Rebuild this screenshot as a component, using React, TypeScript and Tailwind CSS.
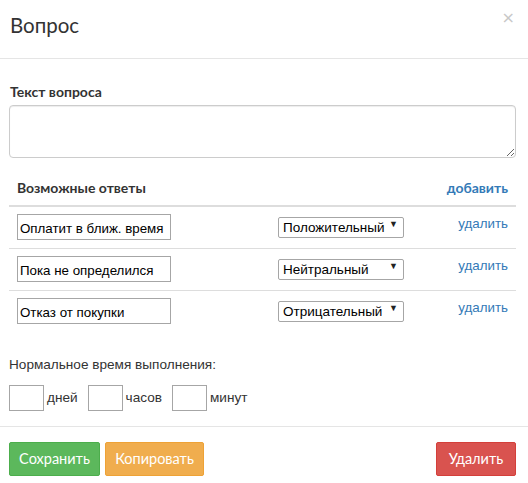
import React from "react";

const rows = [
  { text: "Оплатит в ближ. время", sel: "Положительный" },
  { text: "Пока не определился", sel: "Нейтральный" },
  { text: "Отказ от покупки", sel: "Отрицательный" },
];

export default function App() {
  return (
    <div className="w-[528px] h-[483px] bg-white text-[#333] overflow-hidden">
      {/* header */}
      <div className="h-[59px] border-b border-[#e5e5e5] flex justify-between items-start pl-[10px] pr-[13px]">
        <div className="pt-[11px] text-[20.5px] leading-[28px] font-['Lato',sans-serif] font-normal">Вопрос</div>
        <div className="mt-[10px] text-[16px] leading-[16px] font-normal text-[#c8c8c8] font-['DejaVu_Sans',sans-serif]">×</div>
      </div>

      {/* body */}
      <div className="pl-[9px] pr-[12px] pt-[24px]">
        <div className="pl-[1px] text-[14px] leading-[18px] font-bold font-['Lato',sans-serif]">Текст вопроса</div>
        <textarea className="mt-[4px] block w-full h-[53px] border border-[#ccc] rounded-[4px] shadow-[inset_0_1px_1px_rgba(0,0,0,0.075)] resize-y outline-none"></textarea>

        <div className="mt-[13px]">
          <div className="flex justify-between items-center px-[8px] py-[8px] border-b-2 border-[#ddd] text-[14px] leading-[18px] font-bold font-['Lato',sans-serif]">
            <span>Возможные ответы</span>
            <span className="text-[#337ab7]">добавить</span>
          </div>
          {rows.map((r, i) => (
            <div
              key={i}
              className={
                "flex items-start px-[8px] py-[8px] " +
                (i < rows.length - 1 ? "border-b border-[#ddd]" : "")
              }
            >
              <input
                defaultValue={r.text}
                className="mt-[-1px] w-[154px] h-[26px] border border-[#a6a6a6] px-[2px] pt-[2px] text-[13.33px] text-black font-['Liberation_Sans',sans-serif] outline-none"
              />
              <div className="relative ml-[107px] mt-[-1px] w-[126px] h-[21px]">
                <select
                  defaultValue={r.sel}
                  className="appearance-none w-full h-full border border-[#a6a6a6] rounded-[2px] bg-white pl-[4px] text-[13.5px] leading-[19px] text-black font-['Liberation_Sans',sans-serif] outline-none"
                >
                  <option>Положительный</option>
                  <option>Нейтральный</option>
                  <option>Отрицательный</option>
                </select>
                <span className="absolute right-[6px] top-[3px] text-[9px] leading-[14px] text-[#222] pointer-events-none">▼</span>
              </div>
              <span className="ml-auto text-[13.33px] leading-[18px] text-[#337ab7] font-['Liberation_Sans',sans-serif]">удалить</span>
            </div>
          ))}
        </div>

        <div className="mt-[24px] text-[13.6px] leading-[18px] font-['Liberation_Sans',sans-serif] text-[#333]">
          Нормальное время выполнения:
        </div>
        <div className="mt-[11px] flex items-center text-[13.6px] font-['Liberation_Sans',sans-serif] text-[#333]">
          <input className="w-[35px] h-[26px] border border-[#a6a6a6] outline-none" />
          <span className="ml-[3px]">дней</span>
          <input className="ml-[10px] w-[35px] h-[26px] border border-[#a6a6a6] outline-none" />
          <span className="ml-[3px]">часов</span>
          <input className="ml-[10px] w-[35px] h-[26px] border border-[#a6a6a6] outline-none" />
          <span className="ml-[3px]">минут</span>
        </div>
      </div>

      {/* footer */}
      <div className="mt-[15px] border-t border-[#e5e5e5] pt-[15px] pl-[9px] pr-[12px] flex items-center">
        <button className="w-[91px] h-[34px] bg-[#5cb85c] border border-[#4cae4c] rounded-[2px] text-white text-[14.5px] font-['Lato',sans-serif]">Сохранить</button>
        <button className="ml-[5px] w-[99px] h-[34px] bg-[#f0ad4e] border border-[#eea236] rounded-[2px] text-white text-[14.5px] font-['Lato',sans-serif]">Копировать</button>
        <button className="ml-auto w-[80px] h-[34px] bg-[#d9534f] border border-[#d43f3a] rounded-[2px] text-white text-[14.5px] font-['Lato',sans-serif]">Удалить</button>
      </div>
    </div>
  );
}
